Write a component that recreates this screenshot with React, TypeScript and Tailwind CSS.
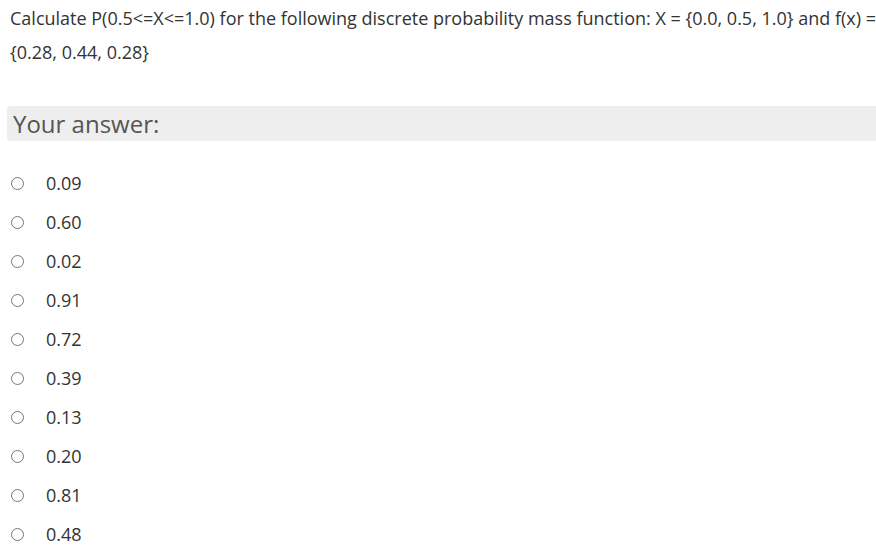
import React from 'react';

const options = ['0.09', '0.60', '0.02', '0.91', '0.72', '0.39', '0.13', '0.20', '0.81', '0.48'];

export default function App() {
  return (
    <div className="w-[876px] h-[557px] overflow-hidden bg-white text-[#333] font-['Open_Sans',sans-serif]">
      <p className="pl-[10px] pt-[1px] text-[18px] leading-[34px] whitespace-nowrap">
        Calculate P(0.5&lt;=X&lt;=1.0) for the following discrete probability mass function: X = {'{'}0.0, 0.5, 1.0{'}'} and f(x) =
        <br />
        {'{'}0.28, 0.44, 0.28{'}'}
      </p>
      <div className="ml-[7px] mt-[37px] h-[35px] rounded-l-[4px] bg-[#eeeeee] pl-[6px] text-[24px] leading-[36px] text-[#555]">
        Your answer:
      </div>
      <div className="mt-[23px] flex flex-col">
        {options.map((o) => (
          <label key={o} className="flex h-[39px] items-center">
            <span className="ml-[11px] h-[13px] w-[13px] rounded-full border border-[#767676] bg-white" />
            <span className="ml-[22px] text-[18px] text-[#333]">{o}</span>
          </label>
        ))}
      </div>
    </div>
  );
}
